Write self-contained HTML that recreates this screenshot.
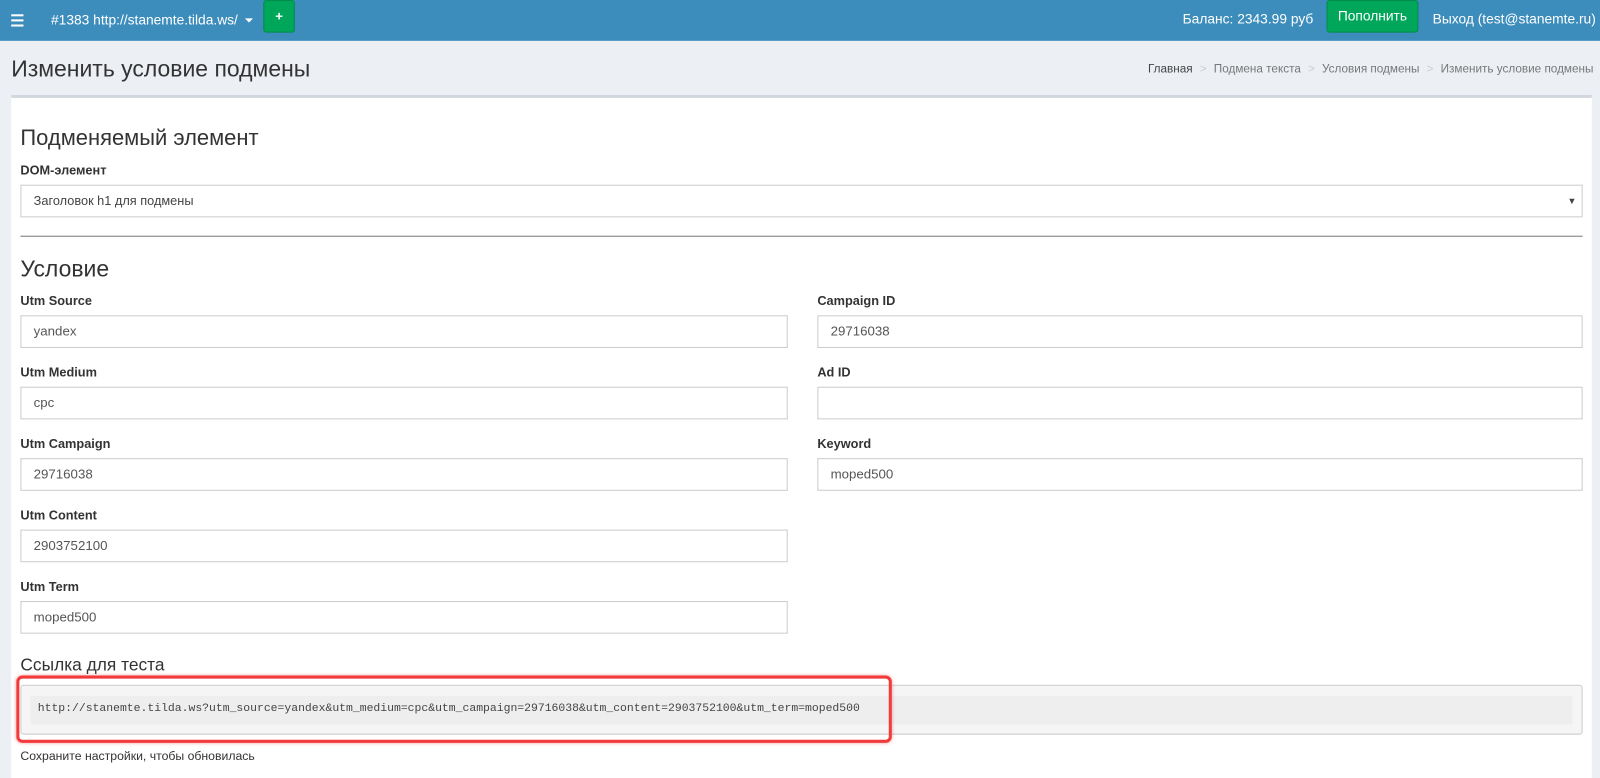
<!DOCTYPE html>
<html><head><meta charset="utf-8"><style>
*{box-sizing:border-box;margin:0;padding:0}
html,body{width:1600px;height:778px;overflow:hidden;background:#ecf0f5}
body{font-family:"Liberation Sans",sans-serif;font-size:13px;color:#333;position:relative}
#w{position:absolute;left:0;top:0;width:1568px;height:763px;transform:scale(1.0204);transform-origin:0 0}
.top{position:absolute;left:0;top:0;width:1568px;height:40px;background:#3c8dbc;color:#fff}
.abs{position:absolute;white-space:nowrap}
.box{position:absolute;left:11px;top:93px;width:1549px;height:700px;background:#fff;border-top:3px solid #d2d6de}
label{position:absolute;font-weight:bold;font-size:12.5px;color:#333}
.in{position:absolute;height:32px;border:1px solid #ccc;padding:0 12px;line-height:30px;font-size:13px;color:#555;background:#fff}
</style></head><body><div id="w">
<div class="top">
 <div class="abs" style="left:11px;top:14px;width:12px">
  <div style="height:2px;background:#fff;margin-bottom:3px"></div><div style="height:2px;background:#fff;margin-bottom:3px"></div><div style="height:2px;background:#fff"></div></div>
 <div class="abs" style="left:50px;top:12px;font-size:13.5px">#1383 http://stanemte.tilda.ws/ <span style="display:inline-block;border-left:4px solid transparent;border-right:4px solid transparent;border-top:4px solid #fff;vertical-align:middle;margin-left:3px"></span></div>
 <div class="abs" style="left:258px;top:0;width:31px;height:32px;background:#00a65a;border:1px solid #008d4c;border-radius:3px;text-align:center;line-height:30px;font-weight:bold">+</div>
 <div class="abs" style="left:1159px;top:11px;font-size:13.5px">Баланс: 2343.99 руб</div>
 <div class="abs" style="left:1300px;top:0;width:90px;height:32px;background:#00a65a;border:1px solid #008d4c;border-radius:3px;text-align:center;line-height:30px;font-size:13.5px">Пополнить</div>
 <div class="abs" style="left:1404px;top:11px;font-size:13.5px">Выход (test@stanemte.ru)</div>
</div>
<div class="abs" style="left:11px;top:55px;font-size:22.5px;color:#333">Изменить условие подмены</div>
<div class="abs" style="left:1125px;top:62px;font-size:11.5px;color:#777"><span style="color:#444">Главная</span><span style="color:#ccc;margin:0 7px">&gt;</span>Подмена текста<span style="color:#ccc;margin:0 7px">&gt;</span>Условия подмены<span style="color:#ccc;margin:0 7px">&gt;</span>Изменить условие подмены</div>
<div class="box"></div>
<div class="abs" style="left:20px;top:123px;font-size:21.5px">Подменяемый элемент</div>
<label style="left:20px;top:160px">DOM-элемент</label>
<div class="in" style="left:20px;top:181px;width:1531px;font-size:12.5px;color:#444">Заголовок h1 для подмены<span style="position:absolute;right:5px;font-size:9px">▼</span></div>
<div class="abs" style="left:20px;top:231px;width:1531px;height:1px;background:#777"></div>
<div class="abs" style="left:20px;top:251px;font-size:22.5px">Условие</div>
<label style="left:20px;top:288px">Utm Source</label><div class="in" style="left:20px;top:309px;width:752px">yandex</div>
<label style="left:20px;top:358px">Utm Medium</label><div class="in" style="left:20px;top:379px;width:752px">cpc</div>
<label style="left:20px;top:428px">Utm Campaign</label><div class="in" style="left:20px;top:449px;width:752px">29716038</div>
<label style="left:20px;top:498px">Utm Content</label><div class="in" style="left:20px;top:519px;width:752px">2903752100</div>
<label style="left:20px;top:568px">Utm Term</label><div class="in" style="left:20px;top:589px;width:752px">moped500</div>
<label style="left:801px;top:288px">Campaign ID</label><div class="in" style="left:801px;top:309px;width:750px">29716038</div>
<label style="left:801px;top:358px">Ad ID</label><div class="in" style="left:801px;top:379px;width:750px"></div>
<label style="left:801px;top:428px">Keyword</label><div class="in" style="left:801px;top:449px;width:750px">moped500</div>
<div class="abs" style="left:20px;top:642px;font-size:17px">Ссылка для теста</div>
<div class="abs" style="left:20px;top:671px;width:1531px;height:49px;background:#f5f5f5;border:1px solid #ccc;border-radius:3px"></div>
<div class="abs" style="left:30px;top:682px;width:1511px;height:28px;background:#eee"></div>
<div class="abs" style="left:37px;top:689px;font-family:'Liberation Mono',monospace;font-size:11.2px;color:#444">http://stanemte.tilda.ws?utm_source=yandex&amp;utm_medium=cpc&amp;utm_campaign=29716038&amp;utm_content=2903752100&amp;utm_term=moped500</div>
<div class="abs" style="left:16px;top:662px;width:858px;height:66px;border:3px solid #f23a3a;border-radius:6px;box-shadow:0 0 3px rgba(240,60,60,.5)"></div>
<div class="abs" style="left:20px;top:734px;font-size:12px;color:#333">Сохраните настройки, чтобы обновилась</div>
</div></body></html>
